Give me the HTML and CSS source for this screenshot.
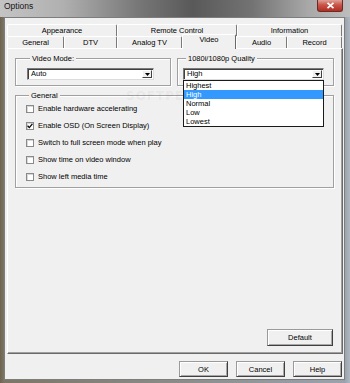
FILE: index.html
```html
<!DOCTYPE html>
<html lang="en">
  <head>
    <meta charset="UTF-8" />
    <meta name="viewport" content="width=device-width, initial-scale=1.0" />
    <title>Options</title>
    <link rel="stylesheet" href="styles.css">
  </head>
  <body>
    <div class="window">
      <div class="titlebar">
        <span class="title">Options</span>
        <span class="close">
          <svg width="9" height="7" viewBox="0 0 9 7"><path d="M1.5 0.8 L7.5 6.2 M7.5 0.8 L1.5 6.2" stroke="#fff" stroke-width="1.7" /></svg>
        </span>
      </div>

      <div class="client">
        <div class="tab-row">
          <div class="tab tab-appearance">Appearance</div>
          <div class="tab tab-remote">Remote Control</div>
          <div class="tab tab-info">Information</div>
        </div>
        <div class="tab-row">
          <div class="tab tab-general">General</div>
          <div class="tab tab-dtv">DTV</div>
          <div class="tab tab-analog">Analog TV</div>
          <div class="tab tab-video active">Video</div>
          <div class="tab tab-audio">Audio</div>
          <div class="tab tab-record">Record</div>
        </div>

        <div class="panel">
          <div class="group-row">
            <fieldset class="group group-mode">
              <legend>Video Mode:</legend>
              <div class="combo combo-mode">
                <span class="combo-text">Auto</span>
                <span class="combo-btn"><svg width="5" height="3" viewBox="0 0 5 3"><polygon points="0,0 5,0 2.5,3" fill="#000" /></svg></span>
              </div>
            </fieldset>
            <fieldset class="group group-quality">
              <legend>1080i/1080p Quality</legend>
              <div class="combo combo-quality">
                <span class="combo-text">High</span>
                <span class="combo-btn"><svg width="5" height="3" viewBox="0 0 5 3"><polygon points="0,0 5,0 2.5,3" fill="#000" /></svg></span>
                <ul class="dropdown">
                  <li>Highest</li>
                  <li class="selected">High</li>
                  <li>Normal</li>
                  <li>Low</li>
                  <li>Lowest</li>
                </ul>
              </div>
            </fieldset>
          </div>

          <fieldset class="group group-general">
            <legend>General</legend>
            <label class="check-row"><span class="checkbox"></span>Enable hardware accelerating</label>
            <label class="check-row"><span class="checkbox"><svg width="6" height="6" viewBox="0 0 6 6"><path d="M0.6 2.8 L2.3 4.6 L5.4 0.9" stroke="#000" stroke-width="1.3" fill="none" /></svg></span>Enable OSD (On Screen Display)</label>
            <label class="check-row"><span class="checkbox"></span>Switch to full screen mode when play</label>
            <label class="check-row"><span class="checkbox"></span>Show time on video window</label>
            <label class="check-row"><span class="checkbox"></span>Show left media time</label>
          </fieldset>

          <div class="panel-footer">
            <button class="btn btn-default">Default</button>
          </div>

          <div class="watermark">SOFTPEDIA</div>
        </div>

        <div class="buttons">
          <button class="btn">OK</button>
          <button class="btn">Cancel</button>
          <button class="btn">Help</button>
        </div>
      </div>
    </div>
  </body>
</html>
```

FILE: styles.css
```css
* {
  box-sizing: border-box;
}
body {
  margin: 0;
  font-family: "Liberation Sans", Arial, sans-serif;
  font-size: 7.5px;
  color: #000;
}
.window {
  position: relative;
  width: 350px;
  height: 383px;
  overflow: hidden;
  background: linear-gradient(90deg, #6e6350 0, #7c7565 4px, #9aa3ad 345px, #aeb7c2 350px);
  display: flex;
  flex-direction: column;
}

/* title bar */
.titlebar {
  height: 17px;
  display: flex;
  align-items: flex-start;
  padding-left: 4px;
  background: linear-gradient(90deg, #c4c4c4 0, #b0b0b0 18%, #767676 40%, #595959 55%, #737373 72%, #a8a8a8 88%, #bdbdbd 100%);
}
.title {
  font-size: 8.5px;
  line-height: 13px;
  color: #151515;
}
.close {
  margin-left: auto;
  margin-right: 7px;
  width: 26px;
  height: 12px;
  display: flex;
  align-items: center;
  justify-content: center;
  background: linear-gradient(#e0a095, #c8544a 45%, #b22d22);
  border: 1px solid #6b2a24;
  border-top: none;
  border-radius: 0 0 3px 3px;
}

/* client area */
.client {
  margin: 0 5px 0 4px;
  height: 363px;
  background: #f0f0f0;
  border: 1px solid #7d7d7d;
  padding: 6px 1px 0 2px;
  display: flex;
  flex-direction: column;
}

/* tabs */
.tab-row {
  display: flex;
  height: 12px;
}
.tab {
  height: 12px;
  line-height: 11px;
  text-align: center;
  white-space: nowrap;
  background: #f0f0f0;
  border-top: 1px solid #fff;
  border-left: 1px solid #fff;
  border-right: 1px solid #7a7a7a;
  border-radius: 2px 2px 0 0;
}
.tab-appearance { width: 110px; }
.tab-remote { width: 120px; }
.tab-info { width: 105px; }
.tab-general { width: 57px; }
.tab-dtv { width: 53px; }
.tab-analog { width: 65px; }
.tab-video { width: 54px; }
.tab-audio { width: 51px; }
.tab-record { width: 55px; }
.tab.active {
  position: relative;
  z-index: 1;
  height: 15px;
  margin-top: -2px;
  margin-bottom: -1px;
  line-height: 10px;
  padding-bottom: 3px;
  border-right-color: #696969;
}

/* tab page */
.panel {
  position: relative;
  height: 306px;
  border: 1px solid;
  border-color: #fff #696969 #696969 #fff;
  box-shadow: inset -1px -1px 0 #a0a0a0;
  padding: 5px 8px 7px 7px;
  display: flex;
  flex-direction: column;
}
.group-row {
  display: flex;
  gap: 6px;
}
.group {
  margin: 0;
  padding: 0;
  min-width: 0;
  border: 1px solid #a0a0a0;
  box-shadow: 1px 1px 0 #fff, inset 1px 1px 0 #fff;
}
.group legend {
  margin-left: 3px;
  padding: 0 2px;
  line-height: 9px;
  background: #f0f0f0;
}
.group-mode {
  width: 156px;
  padding: 5px 0 5px 11px;
}
.group-quality {
  width: 157px;
  padding: 5px 0 5px 5px;
}
.group-general {
  margin-top: 5px;
  width: 319px;
  padding: 0 0 2px 10px;
}

/* combo boxes */
.combo {
  position: relative;
  height: 12px;
  display: flex;
  align-items: center;
  background: #fff;
  border: 1px solid;
  border-color: #7a7a7a #dcdcdc #dcdcdc #7a7a7a;
  box-shadow: inset 1px 1px 0 #404040;
}
.combo-mode { width: 127px; }
.combo-quality { width: 141px; }
.combo-text {
  flex: 1;
  padding-left: 3px;
  line-height: 10px;
}
.combo-btn {
  width: 10px;
  height: 8px;
  margin-right: 1px;
  display: flex;
  align-items: center;
  justify-content: center;
  background: #f0f0f0;
  border: 1px solid;
  border-color: #fff #404040 #404040 #fff;
}

/* open list */
.dropdown {
  position: absolute;
  top: 11px;
  left: -1px;
  width: 141px;
  margin: 0;
  padding: 0;
  list-style: none;
  background: #fff;
  border: 1px solid #1a1a1a;
  z-index: 2;
}
.dropdown li {
  height: 9px;
  line-height: 9px;
  padding-left: 2px;
}
.dropdown li.selected {
  background: #3399ff;
  color: #fff;
}

/* checkboxes */
.check-row {
  height: 17px;
  display: flex;
  align-items: center;
}
.checkbox {
  width: 8px;
  height: 8px;
  margin-right: 4px;
  display: flex;
  align-items: center;
  justify-content: center;
  background: #fff;
  border: 1px solid #8a8a8a;
  box-shadow: inset 1px 1px 0 #d8d8d8;
}

/* buttons */
.panel-footer {
  margin-top: auto;
  display: flex;
  justify-content: flex-end;
  padding-right: 1px;
}
.btn {
  width: 49px;
  height: 16px;
  padding: 0;
  font: inherit;
  color: #000;
  background: #f0f0f0;
  border: 1px solid;
  border-color: #9a9a9a #404040 #404040 #9a9a9a;
  box-shadow: inset 1px 1px 0 #fff, inset -1px -1px 0 #a8a8a8;
}
.btn-default {
  width: 66px;
  height: 17px;
}
.buttons {
  margin-top: 7px;
  display: flex;
  justify-content: flex-end;
  gap: 8px;
  padding-right: 1px;
}

/* screenshot watermark, sits to the left of the open list */
.watermark {
  position: absolute;
  left: 118px;
  top: 40px;
  z-index: 1;
  font-family: "DejaVu Sans", sans-serif;
  font-weight: bold;
  font-size: 12px;
  letter-spacing: 1px;
  color: rgba(0, 0, 0, 0.05);
}
```
